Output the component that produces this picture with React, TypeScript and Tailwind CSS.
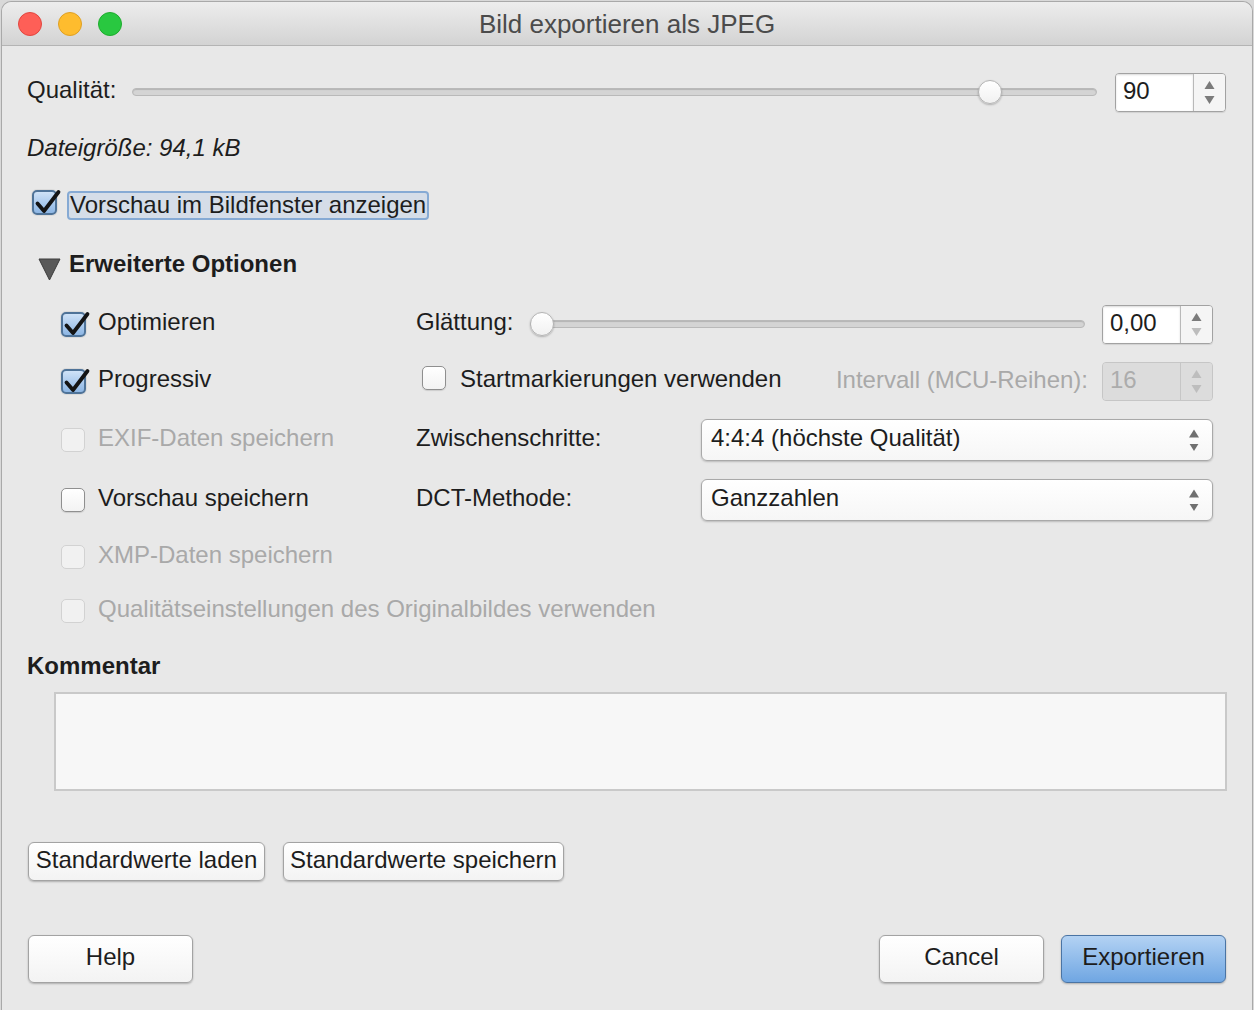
import React from 'react';

const sans = "font-['Liberation_Sans',Helvetica,Arial,sans-serif]";

type CheckState = 'checked' | 'unchecked' | 'disabled';

function CheckBox({ state }: { state: CheckState }) {
  if (state === 'checked') {
    return (
      <span className="relative inline-block h-[25px] w-[25px] shrink-0 rounded-[5px] border-2 border-[#4f7398] bg-gradient-to-b from-[#cfe2f7] to-[#8db6e4] shadow-[0_0_0_1px_rgba(0,0,0,0.06)]">
        <svg className="absolute -top-[4px] -left-[1px] h-[28px] w-[29px]" viewBox="0 0 29 28">
          <path d="M4.5 15.5 L11 23 L25.5 4" fill="none" stroke="#141414" strokeWidth="3.8" strokeLinecap="round" strokeLinejoin="round" />
        </svg>
      </span>
    );
  }
  if (state === 'disabled') {
    return <span className="inline-block h-[24px] w-[24px] shrink-0 rounded-[5px] border border-[#d2d2d2] bg-[#f1f1f1]" />;
  }
  return (
    <span className="inline-block h-[24px] w-[24px] shrink-0 rounded-[5px] border border-[#8f8f8f] bg-gradient-to-b from-white to-[#f3f3f3] shadow-[0_1px_1px_rgba(0,0,0,0.12)]" />
  );
}

function Slider({ width, thumbLeft }: { width: number; thumbLeft: number }) {
  return (
    <div className="relative flex h-[26px] shrink-0 items-center" style={{ width }}>
      <div className="h-[8px] w-full rounded-full border border-[#b9b9b9] bg-[#d4d4d4] shadow-[inset_0_1px_1px_rgba(0,0,0,0.15)]" />
      <div
        className="absolute top-px h-[24px] w-[24px] rounded-full border border-[#b4b4b4] bg-gradient-to-b from-white to-[#f1f1f1] shadow-[0_1px_2px_rgba(0,0,0,0.25)]"
        style={{ left: thumbLeft }}
      />
    </div>
  );
}

function Arrow({ dir, color, w = 11, h = 8 }: { dir: 'up' | 'down'; color: string; w?: number; h?: number }) {
  return (
    <svg width={w} height={h} viewBox="0 0 10 8">
      {dir === 'up' ? <polygon points="5,0 10,8 0,8" fill={color} /> : <polygon points="0,0 10,0 5,8" fill={color} />}
    </svg>
  );
}

function SpinBox({ value, width, disabled, downDim }: { value: string; width: number; disabled?: boolean; downDim?: boolean }) {
  return (
    <div
      className={`flex h-[39px] shrink-0 overflow-hidden rounded-[4px] border ${disabled ? 'border-[#c6c6c6] bg-[#dcdcdc]' : 'border-[#a2a2a2] shadow-[0_1px_1px_rgba(0,0,0,0.1)]'}`}
      style={{ width }}
    >
      <div
        className={`flex flex-1 items-center pb-[3px] pl-[7px] text-[24px] ${disabled ? 'bg-[#dcdcdc] text-[#acacac]' : 'bg-white text-[#1d1d1d] shadow-[inset_0_1px_2px_rgba(0,0,0,0.15)]'}`}
      >
        {value}
      </div>
      <div className={`flex w-[32px] flex-col items-center justify-center gap-[7px] border-l ${disabled ? 'border-[#c6c6c6] bg-[#dcdcdc]' : 'border-[#b9b9b9] bg-[#f5f5f5]'}`}>
        <Arrow dir="up" color={disabled ? '#bdbdbd' : '#7b7b7b'} />
        <Arrow dir="down" color={disabled || downDim ? '#bdbdbd' : '#7b7b7b'} />
      </div>
    </div>
  );
}

function Select({ value }: { value: string }) {
  return (
    <div className="flex h-[42px] w-[512px] shrink-0 items-center justify-between rounded-[6px] border border-[#a9a9a9] bg-gradient-to-b from-white to-[#f6f6f6] pl-[9px] pr-[13px] text-[24px] text-[#1d1d1d] shadow-[0_1px_2px_rgba(0,0,0,0.2)]">
      <span className="pb-[4px]">{value}</span>
      <div className="flex flex-col items-center gap-[6px]">
        <Arrow dir="up" color="#707070" w={10} h={9} />
        <Arrow dir="down" color="#707070" w={10} h={7} />
      </div>
    </div>
  );
}

function MacButton({ label, width, height, primary }: { label: string; width: number; height: number; primary?: boolean }) {
  return (
    <button
      className={`flex shrink-0 items-center justify-center rounded-[6px] border pb-[4px] text-[24px] ${
        primary
          ? 'border-[#4a74a4] bg-gradient-to-b from-[#b3d2f3] to-[#6fa6e2] text-[#1d1d1d]'
          : 'border-[#a3a3a3] bg-gradient-to-b from-white to-[#f3f3f3] text-[#1d1d1d]'
      } shadow-[0_1px_2px_rgba(0,0,0,0.25)]`}
      style={{ width, height }}
    >
      {label}
    </button>
  );
}

function OptionLabel({ state, label }: { state: CheckState; label: string }) {
  return (
    <div className="flex items-center">
      <div className="flex w-[26px] justify-start">
        <CheckBox state={state} />
      </div>
      <span className={`ml-[11px] pb-[4px] ${state === 'disabled' ? 'text-[#a9a9a9]' : 'text-[#1d1d1d]'}`}>{label}</span>
    </div>
  );
}

export default function App() {
  return (
    <div className={`h-[1010px] w-[1254px] overflow-hidden bg-[#d9d9d9] ${sans}`}>
      <div className="ml-px mt-px flex h-[1010px] w-[1252px] flex-col rounded-t-[10px] border-x border-t border-[#a9a9a9] bg-[#e8e8e8] text-[24px] leading-[28px] text-[#1d1d1d]">
        {/* Title bar */}
        <div className="grid h-[44px] shrink-0 grid-cols-[1fr_auto_1fr] items-center rounded-t-[10px] border-b border-[#b4b4b4] bg-gradient-to-b from-[#ededed] to-[#d3d3d3]">
          <div className="flex items-center gap-[16px] pl-[16px]">
            <span className="h-[24px] w-[24px] rounded-full border border-[#e2463f] bg-[#fe5f57]" />
            <span className="h-[24px] w-[24px] rounded-full border border-[#dfa023] bg-[#febc2e]" />
            <span className="h-[24px] w-[24px] rounded-full border border-[#1eac2d] bg-[#29c840]" />
          </div>
          <div className="text-[26px] text-[#4b4b4b]">Bild exportieren als JPEG</div>
          <div />
        </div>

        <div className="flex flex-col pl-[25px] pr-[26px]">
          {/* Qualität */}
          <div className="mt-[27px] flex h-[38px] items-center">
            <span className="w-[88px] pb-[4px]">Qualität:</span>
            <div className="ml-[17px]">
              <Slider width={965} thumbLeft={846} />
            </div>
            <div className="ml-[18px]">
              <SpinBox value="90" width={111} />
            </div>
          </div>

          <div className="mt-[23px] h-[28px] italic">Dateigröße: 94,1 kB</div>

          <div className="mt-[29px] flex h-[28px] items-center">
            <div className="ml-[5px]">
              <CheckBox state="checked" />
            </div>
            <span className="ml-[10px] rounded-[4px] border-2 border-[#86aad4] bg-[#d5dde8] px-[1px] pb-[2px] leading-[23px]">
              Vorschau im Bildfenster anzeigen
            </span>
          </div>

          <div className="mt-[32px] flex h-[28px] items-center">
            <svg className="ml-[11px] mt-[9px]" width="23" height="23" viewBox="0 0 23 23">
              <polygon points="1,1 22,1 11.5,22" fill="#5a5a5a" stroke="#3c3c3c" strokeWidth="1" strokeLinejoin="round" />
            </svg>
            <span className="ml-[8px] pb-[3px] font-bold">Erweiterte Optionen</span>
          </div>

          {/* Advanced grid */}
          <div className="ml-[34px] flex w-[1152px] flex-col">
            <div className="mt-[25px] flex h-[40px] items-center">
              <div className="w-[355px]">
                <OptionLabel state="checked" label="Optimieren" />
              </div>
              <span className="w-[114px] pb-[4px]">Glättung:</span>
              <Slider width={555} thumbLeft={0} />
              <div className="ml-[17px]">
                <SpinBox value="0,00" width={111} downDim />
              </div>
            </div>

            <div className="mt-[16px] flex h-[42px] items-center">
              <div className="w-[355px]">
                <OptionLabel state="checked" label="Progressiv" />
              </div>
              <div className="ml-[6px]">
                <CheckBox state="unchecked" />
              </div>
              <span className="ml-[14px] pb-[4px]">Startmarkierungen verwenden</span>
              <div className="flex-1" />
              <span className="pb-[2px] text-[#a9a9a9]">Intervall (MCU-Reihen):</span>
              <div className="ml-[14px]">
                <SpinBox value="16" width={111} disabled />
              </div>
            </div>

            <div className="mt-[16px] flex h-[44px] items-center">
              <div className="w-[355px]">
                <OptionLabel state="disabled" label="EXIF-Daten speichern" />
              </div>
              <span className="w-[285px] pb-[4px]">Zwischenschritte:</span>
              <Select value="4:4:4 (höchste Qualität)" />
            </div>

            <div className="mt-[16px] flex h-[44px] items-center">
              <div className="w-[355px]">
                <OptionLabel state="unchecked" label="Vorschau speichern" />
              </div>
              <span className="w-[285px] pb-[4px]">DCT-Methode:</span>
              <Select value="Ganzzahlen" />
            </div>

            <div className="mt-[18px] flex h-[34px] items-center">
              <OptionLabel state="disabled" label="XMP-Daten speichern" />
            </div>

            <div className="mt-[20px] flex h-[34px] items-center">
              <OptionLabel state="disabled" label="Qualitätseinstellungen des Originalbildes verwenden" />
            </div>
          </div>

          <div className="mt-[24px] h-[28px] font-bold">Kommentar</div>

          <div className="ml-[27px] mt-[12px] h-[99px] w-[1173px] border-2 border-[#c9c9c9] bg-[#f7f7f7]" />

          <div className="ml-px mt-[51px] flex gap-[18px]">
            <MacButton label="Standardwerte laden" width={237} height={39} />
            <MacButton label="Standardwerte speichern" width={281} height={39} />
          </div>

          <div className="ml-px mt-[54px] flex items-center">
            <MacButton label="Help" width={165} height={48} />
            <div className="flex-1" />
            <MacButton label="Cancel" width={165} height={48} />
            <div className="ml-[17px]">
              <MacButton label="Exportieren" width={165} height={48} primary />
            </div>
          </div>
        </div>
      </div>
    </div>
  );
}
